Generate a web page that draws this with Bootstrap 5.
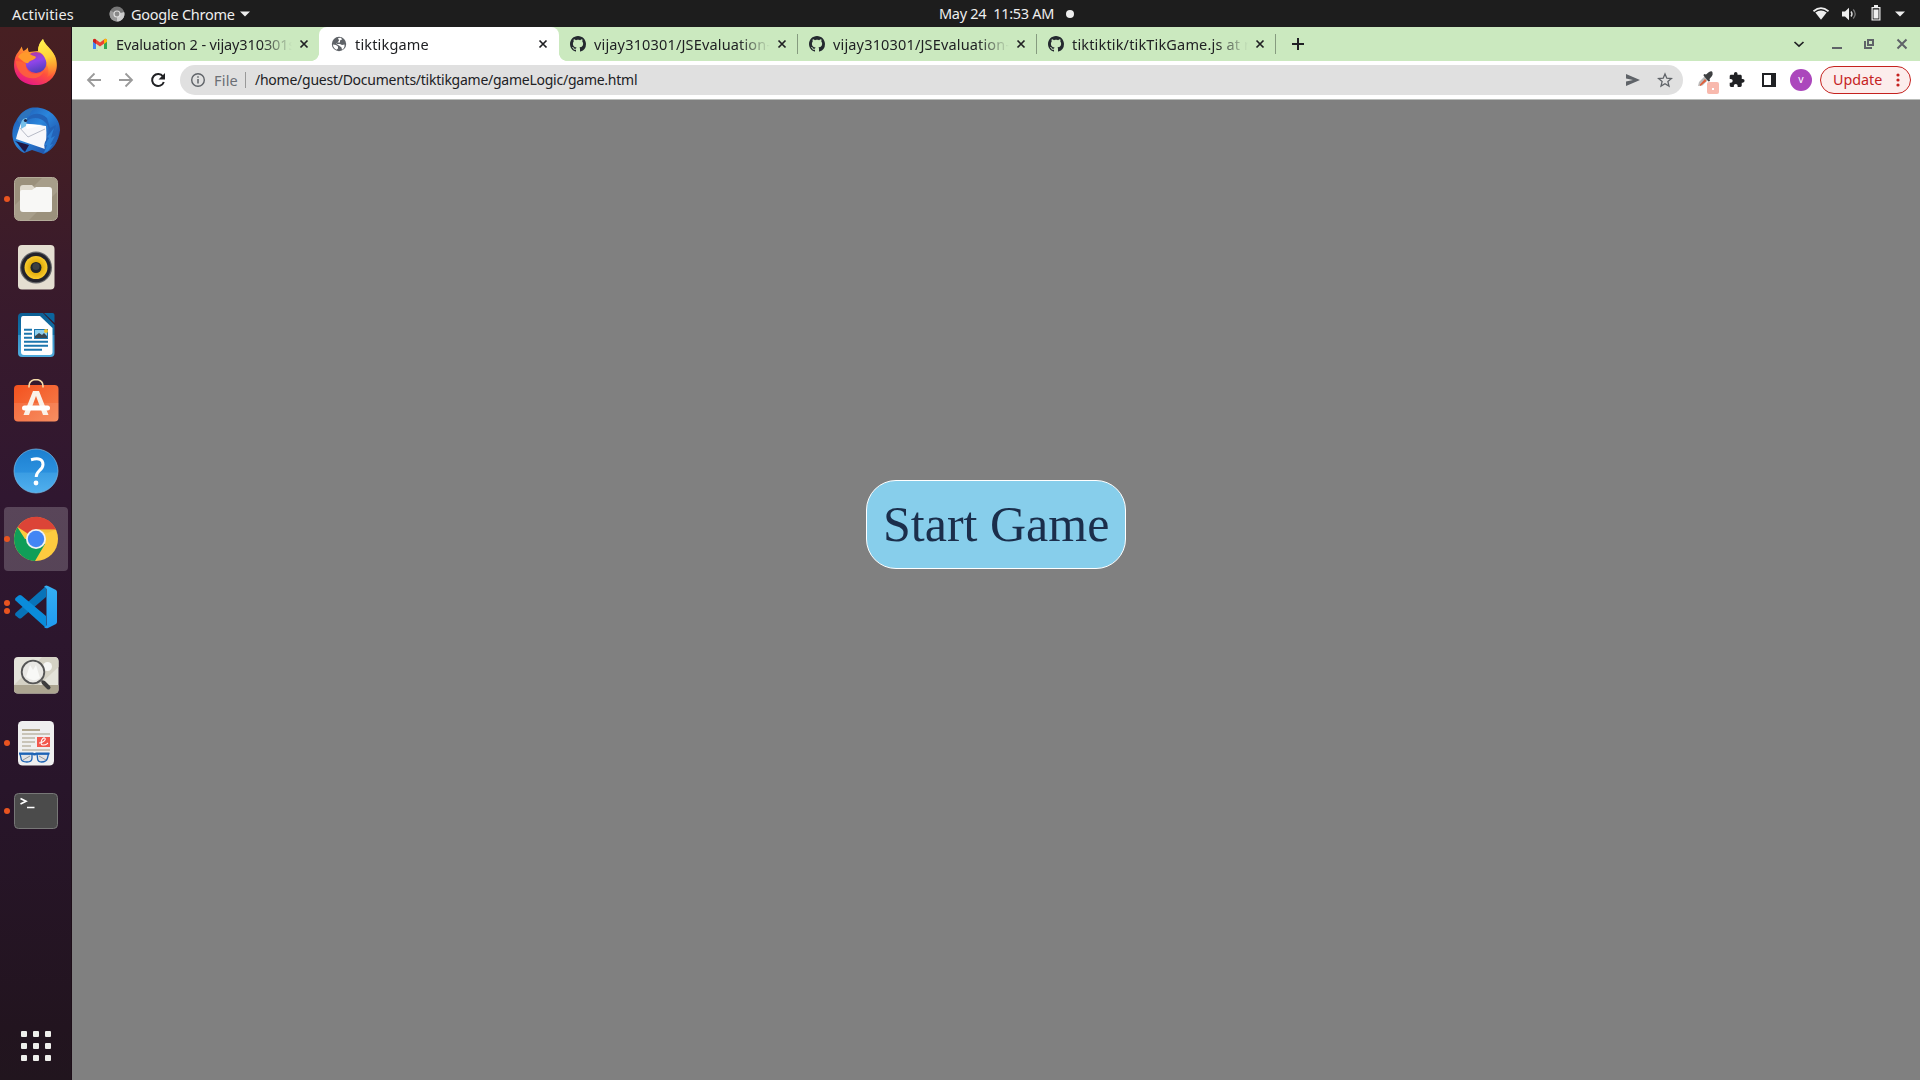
<!DOCTYPE html>
<html lang="en">
<head>
<meta charset="utf-8">
<title>tiktikgame</title>
<link href="https://cdn.jsdelivr.net/npm/bootstrap@5.3.0/dist/css/bootstrap.min.css" rel="stylesheet">
<style>
body{width:1920px;height:1080px;overflow:hidden;font-family:"Noto Sans","Open Sans",sans-serif;font-size:14.5px;line-height:20px;color:#202124}
svg{display:block;flex:none}
.topbar{height:27px;background:#1d1d1d;color:#eee;font-size:14.5px}
.topbar .side{width:800px}
.clock{white-space:pre;margin-left:139px}
.clock span{letter-spacing:-.3px;width:127px;margin-top:-1px}
.dock{width:72px;background:linear-gradient(#471f22 0,#431e24 110px,#3a1b2b 240px,#301730 470px,#28152a 760px,#22141f 1000px,#21151e);padding-top:2px;box-shadow:inset -1px 0 #1d0e18}
.dock-item{width:72px;height:68px;flex:none}
.dock-item.active-app::before{content:"";position:absolute;left:4px;top:2px;width:64px;height:64px;border-radius:4px;background:rgba(255,255,255,.2)}
.dock-item svg{position:relative}
.run{position:absolute;left:4px;top:0;height:68px;gap:2.5px}
.run i{width:6px;height:6px;border-radius:50%;background:#e95420}
.tabstrip{height:34px;background:#cbe9bf;padding-left:8px}
.tab{width:239px;height:34px;padding:0 7px 0 12px;flex:none}
.tab-title{width:176px;margin-left:8px;margin-right:4px;-webkit-mask-image:linear-gradient(90deg,#000 145px,transparent 176px);white-space:nowrap;overflow:hidden;letter-spacing:.16px;padding-bottom:1px}
.tab-title.mail{letter-spacing:-.12px}
.tab.sep::after{content:"";position:absolute;right:-1px;top:7px;width:1px;height:20px;background:#869b7f}
.tab.open{background:#fff;border-radius:8px 8px 0 0;width:240px;margin-right:-1px;z-index:1;padding-right:8px}
.tab.open::before,.tab.open::after{content:"";position:absolute;bottom:0;width:8px;height:8px}
.tab.open::before{left:-8px;background:radial-gradient(circle at 0 0,transparent 7.6px,#fff 8.2px)}
.tab.open::after{right:-8px;background:radial-gradient(circle at 100% 0,transparent 7.6px,#fff 8.2px)}
.toolbar{height:39px;background:#fff;border-bottom:1px solid #b9bcb9;padding:0 9px 0 6px}
.tool{width:32px;height:38px}
.omni{height:30px;border-radius:15px;background:#e0e0e0;margin:0 6px;padding-left:10px;padding-right:2px}
.avatar{width:22px;height:22px;border-radius:50%;background:#ab47bc;color:#fff;font-size:10.5px;line-height:20px;text-align:center}
.update{width:91px;height:28px;border:1px solid #c5221f;border-radius:14px;background:#fcedec;color:#c5221f;margin-left:3px;padding-left:12px;padding-right:8px;font-size:14.3px}
.page{background:#808080}
.start{margin-top:380px;width:260px;height:89px;border:1px solid #fff;border-radius:30px;background:#87ceeb;color:#1b2e4b;font:50px/57px "Liberation Serif",serif;padding:15px 16px}
.t-url{letter-spacing:-.25px;font-size:14px}
</style>
<script src="https://cdn.jsdelivr.net/npm/bootstrap@5.3.0/dist/js/bootstrap.bundle.min.js"></script>
</head>
<body class="d-flex flex-column">
<svg width="0" height="0" class="position-absolute">
<defs>
<symbol id="gh" viewBox="0 0 16 16"><path fill="#24292f" d="M8 0C3.58 0 0 3.58 0 8c0 3.54 2.29 6.53 5.47 7.59.4.07.55-.17.55-.38 0-.19-.01-.82-.01-1.49-2.01.37-2.53-.49-2.69-.94-.09-.23-.48-.94-.82-1.13-.28-.15-.68-.52-.01-.53.63-.01 1.08.58 1.23.82.72 1.21 1.87.87 2.33.66.07-.52.28-.87.51-1.07-1.78-.2-3.64-.89-3.64-3.95 0-.87.31-1.59.82-2.15-.08-.2-.36-1.02.08-2.12 0 0 .67-.21 2.2.82.64-.18 1.32-.27 2-.27s1.36.09 2 .27c1.53-1.04 2.2-.82 2.2-.82.44 1.1.16 1.92.08 2.12.51.56.82 1.27.82 2.15 0 3.07-1.87 3.75-3.65 3.95.29.25.54.73.54 1.48 0 1.07-.01 1.93-.01 2.2 0 .21.15.46.55.38A8.01 8.01 0 0 0 16 8c0-4.42-3.58-8-8-8z"/></symbol>
<symbol id="x" viewBox="0 0 16 16"><path d="M4.5 4.5l7 7M11.5 4.5l-7 7" stroke="#202124" stroke-width="1.7"/></symbol>
<linearGradient id="fxa" x1=".8" y1="0" x2=".3" y2="1"><stop offset="0" stop-color="#fff44f"/><stop offset=".35" stop-color="#ffa52c"/><stop offset=".65" stop-color="#ff4f3d"/><stop offset="1" stop-color="#e5158a"/></linearGradient>
<linearGradient id="fxb" x1=".3" y1="0" x2=".6" y2="1"><stop offset="0" stop-color="#b5399f"/><stop offset=".45" stop-color="#8f45ea"/><stop offset="1" stop-color="#4b3fb5"/></linearGradient>
<linearGradient id="fxc" x1=".3" y1="0" x2=".5" y2="1"><stop offset="0" stop-color="#fff24e"/><stop offset=".5" stop-color="#ffd23a"/><stop offset="1" stop-color="#ff8a2a" stop-opacity=".2"/></linearGradient>
<linearGradient id="tb" x1="0" y1="0" x2="1" y2="1"><stop offset="0" stop-color="#1a4fa8"/><stop offset=".45" stop-color="#2b86dc"/><stop offset="1" stop-color="#1b3d93"/></linearGradient>
<linearGradient id="hp" x1="0" y1="0" x2="0" y2="1"><stop offset="0" stop-color="#1c7fd0"/><stop offset=".53" stop-color="#2b90de"/><stop offset=".54" stop-color="#3b9de3"/><stop offset="1" stop-color="#51b0ee"/></linearGradient>
<linearGradient id="sw" x1="0" y1="0" x2="1" y2="1"><stop offset="0" stop-color="#f4511e"/><stop offset="1" stop-color="#f58250"/></linearGradient>
<linearGradient id="wr" x1="0" y1="0" x2="0" y2="1"><stop offset="0" stop-color="#0c5f94"/><stop offset=".5" stop-color="#1273ab"/><stop offset=".51" stop-color="#3592c8"/><stop offset="1" stop-color="#4fabdc"/></linearGradient>
<linearGradient id="vs" x1="0" y1="0" x2="0" y2="1"><stop offset="0" stop-color="#35b0f4"/><stop offset="1" stop-color="#209af0"/></linearGradient>
<radialGradient id="sp"><stop offset=".3" stop-color="#d9a300"/><stop offset="1" stop-color="#f9cb2e"/></radialGradient>
</defs>
</svg>

<header class="topbar d-flex align-items-center flex-shrink-0">
 <div class="side d-flex align-items-center">
  <span style="margin-left:12px;width:97px;letter-spacing:.15px">Activities</span>
  <svg width="16" height="16" viewBox="0 0 16 16"><circle cx="8" cy="8" r="7.5" fill="#777"/><path d="M8 8L15.2 6A7.5 7.5 0 0 1 7.5 15.5z" fill="#ccc"/><path d="M8 8L1.4 4.5A7.5 7.5 0 0 0 7.5 15.5z" fill="#999"/><circle cx="8" cy="8" r="3.6" fill="#ddd"/><circle cx="8" cy="8" r="2.4" fill="#888"/></svg>
  <span style="margin-left:6px;width:109px;letter-spacing:-.25px">Google Chrome</span>
  <svg width="10" height="6" viewBox="0 0 10 6"><path d="M0 .5h10L5 5.5z" fill="#eee"/></svg>
 </div>
 <div class="clock d-flex align-items-center"><span>May 24  11:53 AM</span><svg width="8" height="8" viewBox="0 0 8 8"><circle cx="4" cy="4" r="4" fill="#eee"/></svg></div>
 <div class="side d-flex align-items-center justify-content-end ms-auto" style="padding-right:15px">
  <svg width="16" height="14" viewBox="0 0 16 14" style="margin-right:12px"><path d="M.5 4.3Q8-2.2 15.500 4.300" fill="none" stroke="#eee" stroke-width="1.700"/><path d="M2.300 5.600Q8 1.500 13.700 5.600L8 12.800z" fill="#eee"/></svg>
  <svg width="16" height="14" viewBox="0 0 16 14" style="margin-right:14px"><path d="M1 4.500h3L8 .8v12.400L4 9.500H1z" fill="#eee"/><path d="M10 4.500q2 2.500 0 5" fill="none" stroke="#ddd" stroke-width="1.400"/><path d="M12.200 2.500q4 4.500 0 9" fill="none" stroke="#777" stroke-width="1.300"/></svg>
  <svg width="10" height="16" viewBox="0 0 10 16" style="margin-right:14px;margin-top:-2px"><path d="M3 0h4v2h2.500v13.500h-9V2H3z" fill="#eee"/><path d="M1.700 3.200h6.600v11.200H1.700z" fill="#1d1d1d"/><path d="M2.500 4.500h5v9h-5z" fill="#eee"/></svg>
  <svg width="10" height="6" viewBox="0 0 10 6"><path d="M0 .5h10L5 5.500z" fill="#eee"/></svg>
 </div>
</header>

<div class="d-flex flex-grow-1">
<nav class="dock d-flex flex-column flex-shrink-0">
 <div class="dock-item position-relative d-flex align-items-center justify-content-center">
  <svg width="48" height="48" viewBox="0 1 48 48"><path d="M3 20C5 14 8 13 9.500 8.500c1 2 1 3 2 4.500 2-1 3-2 4.500-3.500 0 2 0 3 1 4.500l9-1c0-5 2-9 5-12 2 6 8 9 12 17 6 14-3 29-19 29S-1 35 3 20z" fill="url(#fxa)"/><circle cx="24" cy="24.500" r="10.500" fill="url(#fxb)"/><path d="M26 13c0-5 2-9 5-12 1 7 9 9 12 18 3 9-1 18-8 20 2-4 2-8 0-12-1-6-3-11-9-14z" fill="url(#fxc)"/><path d="M6 19c2-4 7-6 11-4 2 3 5 2 7 4-1 3-5 3-7 5-2 3-5 0-11-5z" fill="#ff9a2b"/><path d="M4 23c4 0 8 1 10 3-1 9 9 13 18 7-3 7-11 9-18 6C8 36 4 30 4 23z" fill="#ff6a35" opacity=".75"/></svg>
 </div>
 <div class="dock-item position-relative d-flex align-items-center justify-content-center">
  <svg width="48" height="48" viewBox="0 0 48 48"><path d="M18 1c16-3 30 8 30 22-1 11-7 20-16 24l-12-4-8 3C-3 38-1 21 4 14c3-6 8-11 14-13z" fill="url(#tb)"/><path d="M5 13c4-8 9-11 17-11-3 2-4 4-4 6-4 1-6 4-10 9z" fill="#2d73bd"/><path d="M3 34c4 3 6 8 10 11l4-7z" fill="#201744"/><path d="M9 16l25 3c1 9 0 17-1 23L4 32c1-5 3-10 5-16z" fill="#f7f7fa"/><path d="M13 17l18 1-16 4z" fill="#fff"/><path d="M7 20l9 10 17-8" fill="none" stroke="#b7bbc7" stroke-width="1"/><path d="M14 15c4-5 14-6 20 1 5 6 2 14-1 19-2 5 2 9-3 12C42 43 47 34 46 24l-4 2 2-8-6 3-3-10C27 4 17 6 14 15z" fill="#2363b8"/><path d="M32 46l3-8-3 1 5-8-2-1 7-9-3 10 4-2-5 9 3-1-5 7z" fill="#2c7fd5"/><path d="M9 17c0-4 3-6 6-6l-1 8-5 3z" fill="#75bfe9"/><circle cx="13.500" cy="13.500" r="1.600" fill="#20294a"/></svg>
 </div>
 <div class="dock-item position-relative d-flex align-items-center justify-content-center"><div class="run d-flex flex-column justify-content-center"><i></i></div>
  <svg width="48" height="48" viewBox="0 0 48 48"><rect x="2.500" y="2.500" width="43" height="43" rx="5" fill="#9b917c" stroke="#b4ac9a"/><path d="M3 30L30 3h12q3 0 3 3v11L17 45H6q-3 0-3-3z" fill="#a79e8a"/><path d="M8 13q0-3 3-3h9l4 4h13v8H8z" fill="#e0dbcf"/><path d="M8 17q0-2 2-2h10l4-3h13q3 0 3 3v20q0 2-2 2H11q-3 0-3-3z" fill="#f8f8f6"/></svg>
 </div>
 <div class="dock-item position-relative d-flex align-items-center justify-content-center">
  <svg width="48" height="48" viewBox="0 0 48 48"><rect x="6" y="2" width="36.500" height="44.500" rx="4" fill="#e4ded1"/><circle cx="24" cy="24.500" r="16" fill="#66676a"/><circle cx="24" cy="24.500" r="14.800" fill="#23232b"/><circle cx="24" cy="24.500" r="11.500" fill="url(#sp)"/><circle cx="24" cy="24.500" r="5.500" fill="#20252a"/><circle cx="24" cy="23.500" r="3.500" fill="#3b3f42"/></svg>
 </div>
 <div class="dock-item position-relative d-flex align-items-center justify-content-center">
  <svg width="48" height="48" viewBox="0 0 48 48"><path d="M10 2h21l11.500 12v28q0 4-4 4H10q-4 0-4-4V6q0-4 4-4z" fill="url(#wr)"/><path d="M11 5h17l12.500 12v24q0 3-3 3H12q-3 0-3-3V8q0-3 2-3z" fill="#fff"/><path d="M32 2h8.500q2 0 2 2v8z" fill="#0b659e"/><path d="M12 18.800h8M12 22.800h8M12 26.800h8M12 30.800h24M12 34.800h24M12 38.800h18" stroke="#1c76ad" stroke-width="1.900"/><rect x="22" y="18" width="14" height="10" fill="#1c76ad"/><rect x="23" y="19" width="12" height="8" fill="#8ed0ee"/><circle cx="34" cy="20" r="2" fill="#f3c530"/><path d="M23 27v-2l4-3 3 2 2-2 3 3v2z" fill="#39474f"/></svg>
 </div>
 <div class="dock-item position-relative d-flex align-items-center justify-content-center">
  <svg width="48" height="48" viewBox="0 2 48 48"><rect x="2" y="8" width="44.500" height="36.500" rx="4" fill="url(#sw)"/><path d="M2 26h44.500v14.500q0 4-4 4H6q-4 0-4-4z" fill="#fff" opacity=".1"/><path d="M17 10.500V9q0-6 7-6.500Q31 3 31 9v1.500" fill="none" stroke="#f5dba9" stroke-width="1.600"/><path fill-rule="evenodd" d="M21 14h6l9.500 24H31l-7-19-7 19h-5.500z" fill="#faf1e9"/><rect x="10" y="28.500" width="28" height="5" rx="2.500" fill="#fff"/></svg>
 </div>
 <div class="dock-item position-relative d-flex align-items-center justify-content-center">
  <svg width="48" height="48" viewBox="0 0 48 48"><circle cx="24" cy="24" r="22" fill="url(#hp)" stroke="#7abdea" stroke-width=".7"/><path d="M19 12.700Q31 9.500 31 17.500Q31 20.500 27.500 23.500Q24.300 26.500 24.200 30" fill="none" stroke="#fff" stroke-width="3"/><circle cx="24" cy="36" r="2.400" fill="#fff"/></svg>
 </div>
 <div class="dock-item active-app position-relative d-flex align-items-center justify-content-center"><div class="run d-flex flex-column justify-content-center"><i></i></div>
  <svg width="48" height="48" viewBox="0 0 48 48"><circle cx="24" cy="24" r="22" fill="#fdcb3f"/><path d="M24 24L5.600 12A22 22 0 0 1 44.200 14.500H24z" fill="#dc4437"/><path d="M5.500 12.200A22 22 0 0 0 23 46L33 29 24 24H13z" fill="#109e58"/><path d="M24 14.500h20.200l-9 3.500z" fill="#e6ad2e" opacity=".4"/><circle cx="24" cy="24" r="10" fill="#f1f1f1"/><circle cx="24" cy="24" r="8.200" fill="#4285f4"/></svg>
 </div>
 <div class="dock-item position-relative d-flex align-items-center justify-content-center"><div class="run d-flex flex-column justify-content-center"><i></i><i></i></div>
  <svg width="48" height="48" viewBox="0 0 48 48"><path d="M3.500 30L34 3v11L9.500 35Q8 36 6.500 35L3.500 32.500Q2.500 31 3.500 30z" fill="#0873b8"/><path d="M3.500 17.500Q2.500 16 3.500 15L6.500 12.500Q8 11.500 9.500 12.500L34 33v12z" fill="#0a8cda"/><path d="M33 3Q34 2 36 3l8 4Q45 8 45 9v30q0 1-1 2l-8 4Q34 46 32 44q2.500 0 2.500-2V6Q34 4 32 4z" fill="url(#vs)"/></svg>
 </div>
 <div class="dock-item position-relative d-flex align-items-center justify-content-center">
  <svg width="48" height="48" viewBox="0 0 48 48"><rect x="2" y="6" width="44.500" height="36.500" rx="4" fill="#e4e3da"/><path d="M2 34L30 6h12q4 0 4.500 4v6L27 34z" fill="#d5d2c5"/><path d="M2 34h44.500v4.500q0 4-4 4H6q-4 0-4-4z" fill="#aca591"/><circle cx="35.500" cy="15.500" r="4.500" fill="#f6f6f4"/><circle cx="21" cy="21" r="11.300" fill="#e9e8e4" stroke="#555" stroke-width="1.800"/><path d="M14 26l4-12 3 5 3-5 4 13q-7 5-14-1z" fill="#f8f8f6"/><path d="M29 29l3 3" stroke="#666" stroke-width="2"/><path d="M31.500 31.500l5 5" stroke="#3d3d3d" stroke-width="4" stroke-linecap="round"/></svg>
 </div>
 <div class="dock-item position-relative d-flex align-items-center justify-content-center"><div class="run d-flex flex-column justify-content-center"><i></i></div>
  <svg width="48" height="48" viewBox="0 0 48 48"><rect x="6" y="2" width="36" height="44.500" rx="4.500" fill="#efefef"/><path d="M10 11h18" stroke="#b1a78f" stroke-width="2"/><path d="M10 15h28M10 19h13M10 23h13M10 27h9M10 31h28" stroke="#c9c4b8" stroke-width="2"/><rect x="25" y="18" width="13" height="10" fill="#f2584d"/><path d="M27 24c4 0 8-4 5.500-5s-5.500 7-1.500 7 4-1.500 5-2" fill="none" stroke="#fff" stroke-width="1.100"/><path d="M8 35h12v4q0 4-5 4-6 0-6-4zM25 35h11.500l-1 4q-1 4-6 4-4 0-4-4z" fill="#e1e3e6" stroke="#1c63b5" stroke-width="1.300"/><path d="M7 34.500h13.500q2 1.500 4 0H37.500" fill="none" stroke="#1c63b5" stroke-width="2.200"/><path d="M11 41l7-4M27 37l7 4" stroke="#999" stroke-width="1"/></svg>
 </div>
 <div class="dock-item position-relative d-flex align-items-center justify-content-center"><div class="run d-flex flex-column justify-content-center"><i></i></div>
  <svg width="48" height="48" viewBox="0 0 48 48"><rect x="2.500" y="6.500" width="43" height="35" rx="4" fill="#4b4b4b" stroke="#777"/><path d="M8.500 11.500l5.500 2.800-5.500 2.800M15 20.500h7.500" fill="none" stroke="#fff" stroke-width="1.700"/></svg>
 </div>
 <div class="mt-auto d-flex justify-content-center" style="padding-bottom:19px">
  <svg width="30" height="30" viewBox="0 0 30 30" fill="#efefec"><g id="dr"><rect width="6" height="6" rx="1"/><rect x="12" width="6" height="6" rx="1"/><rect x="24" width="6" height="6" rx="1"/></g><use href="#dr" y="12"/><use href="#dr" y="24"/></svg>
 </div>
</nav>

<main class="d-flex flex-column flex-grow-1">
 <div class="tabstrip d-flex align-items-center">
  <div class="tab position-relative d-flex align-items-center">
   <svg width="16" height="16" viewBox="0 0 16 16"><path d="M1 4v9h3V7z" fill="#4285f4"/><path d="M15 4v9h-3V7z" fill="#34a853"/><path d="M1 4.500Q1 2.500 3 2.800L8 6.500l5-3.700q2-.3 2 1.700v1L8 10.500 1 5.500z" fill="#ea4335"/><path d="M12 3.600q3-2 3 1v1.200l-3 2.300z" fill="#fbbc04"/><path d="M1 4.600q0-2.500 3-1v4.500L1 5.800z" fill="#c5221f"/></svg>
   <span class="tab-title mail">Evaluation 2 - vijay310301s</span><svg width="16" height="16"><use href="#x"/></svg>
  </div>
  <div class="tab open position-relative d-flex align-items-center">
   <svg width="16" height="16" viewBox="0 0 16 16"><circle cx="8" cy="8" r="7.200" fill="#5f6368"/><path d="M2 8.500l3 .5 2 1.500v2l-1.500 1.200Q2 12 2 8.500zM7 2l3-.3 1 1.800-2 1v2H6.500L5 8H9l2 1 2.500-.5Q14 12 11 13.800l-.5-2.300L8 9.500 5.500 8 8 4.500z" fill="#fff"/></svg>
   <span class="tab-title">tiktikgame</span><svg width="16" height="16"><use href="#x"/></svg>
  </div>
  <div class="tab sep position-relative d-flex align-items-center"><svg width="16" height="16"><use href="#gh"/></svg><span class="tab-title">vijay310301/JSEvaluation-</span><svg width="16" height="16"><use href="#x"/></svg></div>
  <div class="tab sep position-relative d-flex align-items-center"><svg width="16" height="16"><use href="#gh"/></svg><span class="tab-title">vijay310301/JSEvaluation-</span><svg width="16" height="16"><use href="#x"/></svg></div>
  <div class="tab sep position-relative d-flex align-items-center"><svg width="16" height="16"><use href="#gh"/></svg><span class="tab-title">tiktiktik/tikTikGame.js at m</span><svg width="16" height="16"><use href="#x"/></svg></div>
  <svg width="16" height="16" viewBox="0 0 16 16" style="margin-left:15px"><path d="M8 2v12M2 8h12" stroke="#202124" stroke-width="2"/></svg>
  <div class="ms-auto d-flex align-items-center" style="padding-right:10px">
   <svg width="16" height="16" viewBox="0 0 16 16" style="margin-right:22px"><path d="M3.500 6L8 10.200 12.500 6" fill="none" stroke="#202124" stroke-width="1.700"/></svg>
   <svg width="16" height="16" viewBox="0 0 16 16" style="margin-right:16px"><path d="M3 12h10" stroke="#5f6368" stroke-width="2"/></svg>
   <svg width="16" height="16" viewBox="0 0 16 16" style="margin-right:17px"><path d="M7 4h5v5H7z" fill="none" stroke="#5f6368" stroke-width="2"/><path d="M4 5v7h7" fill="none" stroke="#5f6368" stroke-width="2"/></svg>
   <svg width="16" height="16" viewBox="0 0 16 16"><path d="M3.500 3.500l9 9M12.500 3.500l-9 9" stroke="#5f6368" stroke-width="2"/></svg>
  </div>
 </div>
 <div class="toolbar d-flex align-items-center">
  <div class="tool d-flex align-items-center justify-content-center"><svg width="16" height="16" viewBox="0 0 16 16"><path d="M15 8H2.500M8.500 1.500L2 8l6.500 6.500" fill="none" stroke="#9a9a9a" stroke-width="1.800"/></svg></div>
  <div class="tool d-flex align-items-center justify-content-center"><svg width="16" height="16" viewBox="0 0 16 16"><path d="M1 8h12.500M7.500 1.500L14 8l-6.500 6.500" fill="none" stroke="#9a9a9a" stroke-width="1.800"/></svg></div>
  <div class="tool d-flex align-items-center justify-content-center"><svg width="16" height="16" viewBox="0 0 16 16"><path d="M13 4.500A6 6 0 1 0 13.800 10" fill="none" stroke="#202124" stroke-width="2"/><path d="M15 1v6.500H8.500z" fill="#202124"/></svg></div>
  <div class="omni d-flex align-items-center flex-grow-1">
   <svg width="16" height="16" viewBox="0 0 16 16"><circle cx="8" cy="8" r="6.300" fill="none" stroke="#5f6368" stroke-width="1.400"/><path d="M8 7v4.500M8 4.300v1.500" stroke="#5f6368" stroke-width="1.500"/></svg>
   <span style="color:#6b6f75;margin-left:8px;width:31px;letter-spacing:.2px">File</span><span style="width:1px;height:16px;background:#999;margin-right:9px"></span>
   <span class="t-url">/home/guest/Documents/tiktikgame/gameLogic/game.html</span>
   <div class="ms-auto d-flex">
    <div class="tool d-flex align-items-center justify-content-center"><svg width="16" height="16" viewBox="0 0 16 16"><path d="M1 2l14 6-14 6V9.500L8 8 1 6.500z" fill="#5f6368"/></svg></div>
    <div class="tool d-flex align-items-center justify-content-center"><svg width="16" height="16" viewBox="0 0 16 16"><path d="M8 2l1.800 4.200 4.600.4-3.500 3 1.100 4.500L8 11.700l-4 2.400 1.100-4.500-3.500-3 4.600-.4z" fill="none" stroke="#5f6368" stroke-width="1.300"/></svg></div>
   </div>
  </div>
  <div class="tool d-flex align-items-center justify-content-center position-relative"><svg width="28" height="28" viewBox="0 0 28 28"><path d="M7 20l1-4 6-6 3.500 3.500-6 6z" fill="#bbb"/><path d="M8.500 19l5.500-6 1.500 2-6 5z" fill="#e0603c"/><path d="M13 8l2 .5 3-2.500q3-1.500 3.500.5t-.5 3.500l-2.500 3 .5 2-1.500.5-5-6z" fill="#3e4042"/><rect x="16" y="16" width="12" height="12" rx="2" fill="#f8b9ad"/><rect x="21" y="22" width="2" height="2" fill="#fff"/></svg></div>
  <div class="tool d-flex align-items-center justify-content-center"><svg width="17" height="17" viewBox="1 1 24 24"><path fill="#202124" d="M20.500 11H19V7c0-1.100-.9-2-2-2h-4V3.500a2.500 2.500 0 0 0-5 0V5H4c-1.100 0-2 .9-2 2v3.800h1.500a2.700 2.700 0 0 1 0 5.400H2V20c0 1.100.9 2 2 2h3.800v-1.500a2.700 2.700 0 0 1 5.400 0V22H17c1.100 0 2-.9 2-2v-4h1.500a2.500 2.500 0 0 0 0-5z"/></svg></div>
  <div class="tool d-flex align-items-center justify-content-center"><svg width="14" height="14" viewBox="0 0 14 14"><path d="M0 0h14v14H0z" fill="#202124"/><path d="M2 2h7v10H2z" fill="#fff"/></svg></div>
  <div class="tool d-flex align-items-center justify-content-center"><div class="avatar">v</div></div>
  <div class="update d-flex align-items-center justify-content-between"><span>Update</span><svg width="8" height="14" viewBox="0 0 8 14" fill="#c5221f"><circle cx="4" cy="2" r="1.600"/><circle cx="4" cy="7" r="1.600"/><circle cx="4" cy="12" r="1.600"/></svg></div>
 </div>
 <section class="page flex-grow-1 d-flex justify-content-center align-items-start">
  <button class="start text-nowrap">Start Game</button>
 </section>
</main>
</div>
</body>
</html>
